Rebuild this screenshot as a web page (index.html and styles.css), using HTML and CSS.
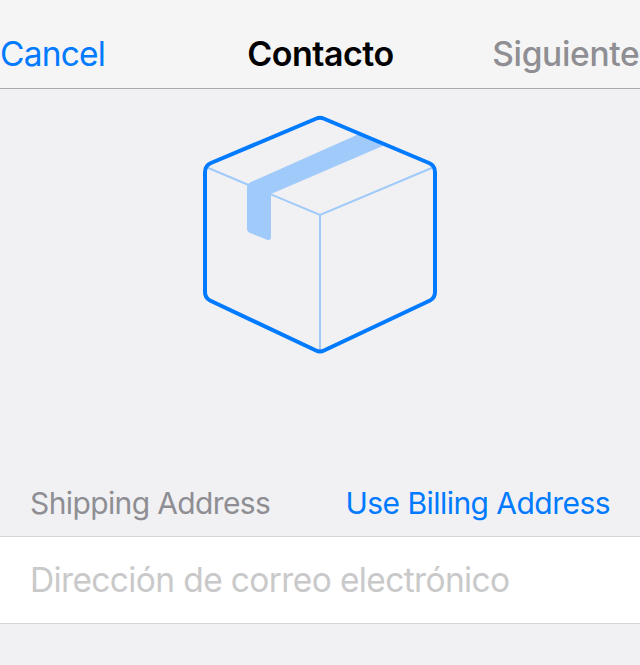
FILE: index.html
```html
<!DOCTYPE html>
<html lang="es">
<head>
<meta charset="utf-8">
<meta name="viewport" content="width=device-width">
<title>Contacto</title>
<link rel="stylesheet" href="styles.css">
</head>
<body>
<header class="navbar">
  <span class="cancel">Cancel</span>
  <span class="title">Contacto</span>
  <span class="next">Siguiente</span>
</header>
<main>
  <div class="hero">
    <svg width="240" height="244" viewBox="200 112 240 244" fill="none">
      <path d="M206 167L320 215L434 167M320 215V351" stroke="#9fcafa" stroke-width="2"/>
      <path d="M359 134L251 182Q247 184 247 187V228.500Q247 231.500 250 233L267 239.700Q271 241 271 237V194L385 145Z" fill="#9fcafa"/>
      <path d="M316.500 118.500Q320 117 323.500 118.500L429 163Q435 165.500 435 172V292Q435 298 430 300.500L324 350.500Q320 352.500 316 350.500L210 300.500Q205 298 205 292V172Q205 165.500 211 163Z" stroke="#007aff" stroke-width="4"/>
    </svg>
  </div>
  <div class="section-head">
    <span class="caption">Shipping Address</span>
    <span class="link">Use Billing Address</span>
  </div>
  <div class="field">Dirección de correo electrónico</div>
</main>
</body>
</html>
```
FILE: styles.css
```css
* { box-sizing: border-box; }
body { margin: 0; background: #f1f1f4; font-family: Inter, sans-serif; }
.navbar { height: 89px; padding-top: 20px; display: grid; grid-template-columns: 1fr auto 1fr; align-items: center; background: #f5f5f5; border-bottom: 1px solid #a9a9ab; font-size: 34px; line-height: 68px; white-space: nowrap; }
.cancel { color: #007aff; font-size: 33.5px; letter-spacing: -0.8px; }
.title { font-weight: 600; letter-spacing: -0.5px; padding-left: 1px; }
.next { color: #8e8e93; font-weight: 500; font-size: 33.5px; letter-spacing: -0.3px; text-align: right; padding-right: 0.5px; }
.hero { height: 381px; padding-top: 23px; display: flex; justify-content: center; align-items: flex-start; }
.section-head { height: 66px; padding: 0 30px; display: flex; justify-content: space-between; align-items: center; font-size: 30px; }
.caption { color: #8e8e93; letter-spacing: -0.62px; }
.link { color: #007aff; letter-spacing: -0.54px; }
.field { height: 88px; padding: 0 30px; border: solid #d6d6d9; border-width: 1px 0; background: #fff; color: #c9c9ca; font-size: 33.5px; letter-spacing: -0.63px; line-height: 87px; }
```
